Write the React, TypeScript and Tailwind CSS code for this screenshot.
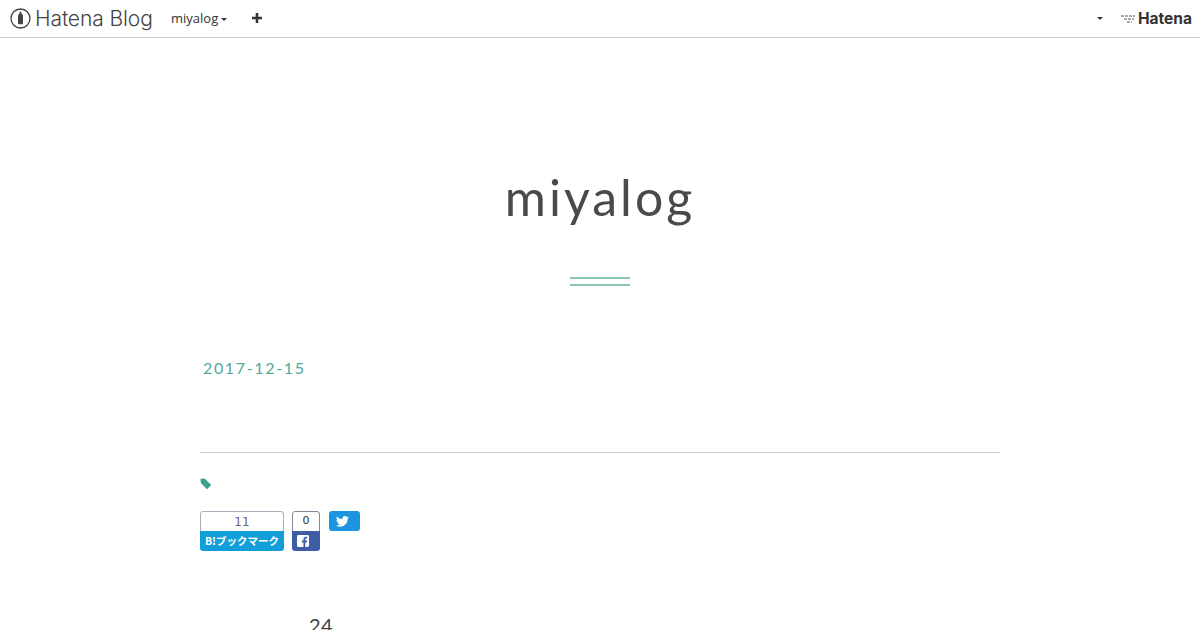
function Caret({ className }: { className: string }) {
  return <span className={"inline-block border-x-[3px] border-t-[3px] border-x-transparent border-t-[#333] " + className} />
}

function HatenaMark() {
  return (
    <svg width="21" height="21" viewBox="0 0 21 21" className="shrink-0">
      <circle cx="10.5" cy="10.5" r="9.5" fill="none" stroke="#444" strokeWidth="1.3" />
      <path d="M10.500 3.500c.9 0 1 1 1 2 1.300.8 1.500 1.800 1.500 3v6.500c0 .8-.6 1.300-1.300 1.300H9.300C8.600 16.300 8 15.800 8 15V8.500c0-1.200.2-2.200 1.500-3 0-1 .1-2 1-2z" fill="#444" />
    </svg>
  )
}

function Bird() {
  return (
    <svg width="13" height="11" viewBox="0 0 24 20" fill="#fff">
      <path d="M24 2.400c-.9.400-1.800.7-2.800.8 1-.6 1.800-1.600 2.200-2.700-1 .6-2 1-3.100 1.200C19.300.7 18 0 16.600 0c-2.700 0-4.900 2.200-4.900 4.900 0 .4 0 .8.100 1.100C7.700 5.800 4.100 3.900 1.700.9c-.4.700-.7 1.600-.7 2.500 0 1.700.9 3.200 2.200 4.100-.8 0-1.600-.2-2.200-.6v.1c0 2.400 1.700 4.400 3.900 4.800-.4.100-.8.200-1.300.2-.3 0-.6 0-.9-.1.600 2 2.400 3.400 4.600 3.400-1.700 1.300-3.800 2.100-6.100 2.100-.4 0-.8 0-1.200-.1C2.200 18.800 4.800 19.600 7.500 19.600c9.100 0 14-7.500 14-14v-.6c1-.7 1.800-1.600 2.500-2.600z" />
    </svg>
  )
}

function Tag() {
  return (
    <svg width="12" height="12" viewBox="0 0 12 12">
      <path d="M.5 1.200 1.200.5 5 .8 11.200 7 7 11.200.8 5z" fill="#3f9e90" />
    </svg>
  )
}

export default function App() {
  return (
    <div className="w-[1200px] h-[630px] overflow-hidden bg-white font-['Lato',sans-serif] text-[#4a4a4a]">
      <header className="h-[38px] flex items-center border-b border-[#ccc] font-['Open_Sans',sans-serif]">
        <div className="ml-[10px] flex items-center gap-[4px] w-[161px]">
          <HatenaMark />
          <span className="font-['Inter',sans-serif] font-light text-[21px] leading-none text-[#444] tracking-[-0.1px]">Hatena Blog</span>
        </div>
        <div className="flex items-center gap-[3px] text-[13px] text-[#333]">
          miyalog
          <Caret className="mt-[1px]" />
        </div>
        <svg width="10" height="10" viewBox="0 0 10 10" className="ml-[25px] -mt-[1px]">
          <path d="M5 0v10M0 5h10" stroke="#333" strokeWidth="2.600" />
        </svg>
        <div className="ml-auto mr-[8px] flex items-center">
          <Caret className="mr-[16px]" />
          <svg width="18" height="12" viewBox="0 0 18 12" className="mr-[1px]">
            <path d="M2 3h14M5 6h10M8 9h5" stroke="#555" strokeWidth="1" strokeDasharray="3 1" fill="none" />
          </svg>
          <span className="font-['Inter',sans-serif] font-bold text-[15.500px] leading-none text-[#333]">Hatena</span>
        </div>
      </header>

      <main className="w-[800px] mx-auto">
        <h1 className="mt-[129px] text-center text-[50px] leading-[60px] tracking-[3px] text-[#4a4a4a]">miyalog</h1>
        <div className="mt-[50px] ml-[370px] w-[60px] h-[9px] border-y-2 border-[#8cc5b9]" />

        <div className="mt-[72px] ml-[3px] text-[16px] leading-[20px] tracking-[1.650px] text-[#4fa99b]">2017-12-15</div>

        <hr className="mt-[74px] border-[#ccc]" />

        <div className="mt-[25px] h-[12px]">
          <Tag />
        </div>

        <div className="mt-[21px] flex items-start font-['DejaVu_Sans',sans-serif]">
          <div className="w-[84px] h-[40px] flex flex-col rounded-[3px] overflow-hidden">
            <div className="h-[20px] flex items-center justify-center border border-b-0 border-[#aab] rounded-t-[3px] text-[12px] text-[#667]">11</div>
            <div className="h-[20px] flex items-center justify-center bg-[#129ed8] text-white text-[10.500px] font-bold font-['Noto_Sans_CJK_JP',sans-serif]">B!ブックマーク</div>
          </div>
          <div className="ml-[8px] w-[28px] h-[40px] flex flex-col rounded-[3px] overflow-hidden">
            <div className="h-[20px] flex items-center justify-center border border-b-0 border-[#889] rounded-t-[3px] text-[11px] text-[#333]">0</div>
            <div className="h-[20px] flex items-center pl-[5px] bg-[#3f5da5]">
              <svg width="12" height="12" viewBox="0 0 13 13">
                <rect width="13" height="13" rx="1.500" fill="#fff" />
                <path d="M9 13V8h1.700l.3-2H9V4.800c0-.6.200-1 1-1h1V2.100C10.700 2 10.200 2 9.600 2 8 2 7 3 7 4.600V6H5.300v2H7v5z" fill="#3f5da5" />
              </svg>
            </div>
          </div>
          <div className="ml-[9px] w-[31px] h-[20px] flex items-center pl-[7px] rounded-[3px] bg-[#1b95e0]">
            <Bird />
          </div>
        </div>

        <p className="mt-[62px] ml-[109px] text-[20px] leading-[24px] tracking-[0.500px] text-[#444]">24</p>
      </main>
    </div>
  )
}
